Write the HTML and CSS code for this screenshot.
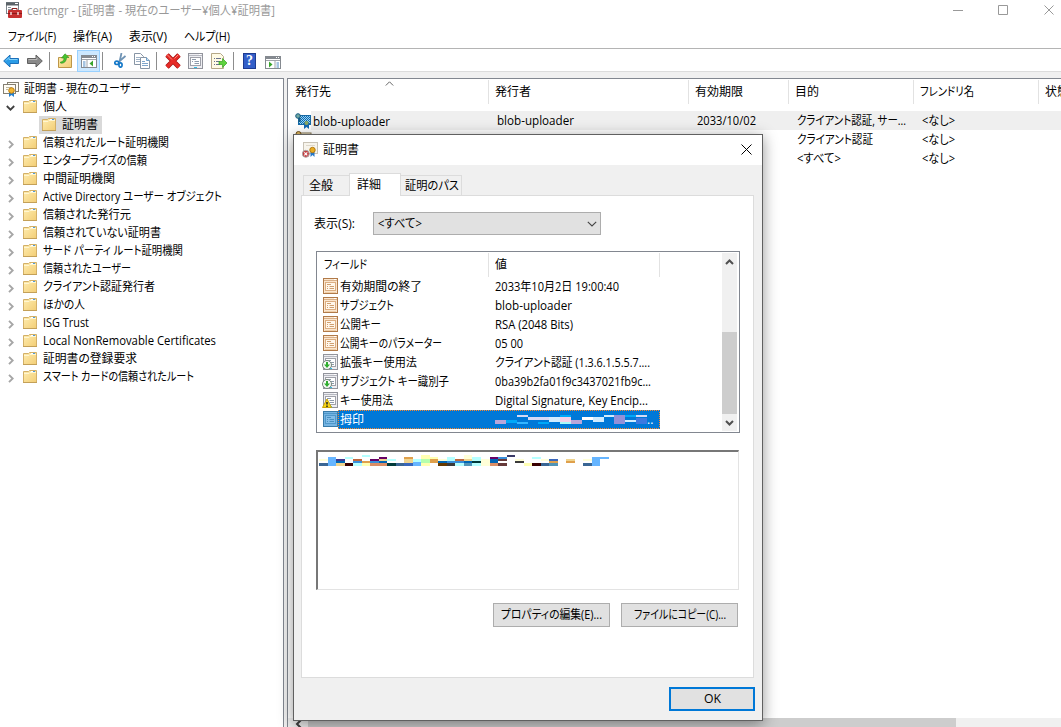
FILE: index.html
```html
<!DOCTYPE html>
<html lang="ja">
<head>
<meta charset="utf-8">
<title>certmgr</title>
<link rel="stylesheet" href="styles.css">
</head>
<body>
<svg class="defs" width="0" height="0" aria-hidden="true">
  <defs>
    <linearGradient id="fg" x1="0" y1="0" x2="1" y2="1"><stop offset="0" stop-color="#ffedb0"/><stop offset="1" stop-color="#f2cd75"/></linearGradient>
    <symbol id="folder" viewBox="0 0 14 13"><path d="M.5 1.500H5.500L6.500 .5H13.500V12.500H.5Z" fill="url(#fg)" stroke="#d3b068"/><path d="M1 3.500H6L7 2.500H13" fill="none" stroke="#fff6d2"/><path d="M0 12.500H14" stroke="#c3a058"/><path d="M8 1.500H10" stroke="#fff"/><path d="M10 1.500H12" stroke="#4c9be0"/></symbol>
    <symbol id="chev" viewBox="0 0 6 9"><path d="M1 .8L4.700 4.500 1 8.200" fill="none" stroke="#a6a6a6" stroke-width="1.900"/></symbol>
    <symbol id="down" viewBox="0 0 9 6"><path d="M.8 1L4.500 4.700 8.200 1" fill="none" stroke="#404040" stroke-width="1.800"/></symbol>
    <symbol id="prop" viewBox="0 0 15 16"><rect x=".5" y=".5" width="14" height="15" fill="#fbe6ce" stroke="#b17a49"/><path d="M1 2.500H14" stroke="#d9b08a"/><path d="M11 1.500H13" stroke="#fff"/><rect x="2.500" y="4.500" width="10" height="8" fill="#fff7ec" stroke="#dcae82"/><path d="M4 6.500H8M4 8.500H5M6.500 8.500H11M4 10.500H5M6.500 10.500H11" stroke="#cf9f70"/><path d="M2 14.500H13" stroke="#efcfa9"/></symbol>
    <symbol id="ext" viewBox="0 0 15 16"><rect x=".5" y=".5" width="14" height="15" fill="#eeeef2" stroke="#92949c"/><path d="M1 2.500H14" stroke="#b6b8c0"/><path d="M11 1.500H13" stroke="#fff"/><rect x="2.500" y="4.500" width="10" height="8" fill="#fff" stroke="#9fa1a9"/><path d="M4 6.500H8M4 8.500H5M6.500 8.500H11M6.500 10.500H11" stroke="#8e9bab"/><path d="M6 14.500H9" stroke="#29bde8"/></symbol>
    <symbol id="extdown" viewBox="0 0 16 16"><use href="#ext" x="1" width="15" height="16"/><circle cx="5" cy="11" r="4.500" fill="#f8f8f8" stroke="#76867a"/><path d="M4 8H6V10.500H8L5 14 2 10.500H4Z" fill="#2fae2e"/></symbol>
    <symbol id="extwarn" viewBox="0 0 16 16"><use href="#ext" x="1" width="15" height="16"/><path d="M5 7L9.500 15.500H.5Z" fill="#f7d716" stroke="#c9a40b"/><path d="M5 10V12.500M5 13.500V15" stroke="#222" stroke-width="1.500"/></symbol>
    <symbol id="cert" viewBox="0 0 16 16"><rect x="4.500" y="1.500" width="11" height="9" fill="#fffdf5" stroke="#847f72"/><rect x=".5" y="3.500" width="12" height="9" fill="#fffdf5" stroke="#847f72"/><path d="M3 6.500H9M3 8.500H5" stroke="#bdb7a3"/><path d="M6 11V16L8.500 14 11 16V11" fill="#237fcf"/><circle cx="8.500" cy="9.500" r="2.800" fill="#f4b631" stroke="#ba7d14"/></symbol>
    <symbol id="console" viewBox="0 0 16 14"><rect x=".5" y="1.500" width="15" height="12" fill="#fff" stroke="#858a90"/><path d="M1 3H15" stroke="#858a90" stroke-width="2"/><path d="M1 5.500H15M6 6V13" stroke="#a0a4aa"/><path d="M11 2.500H12M13 2.500H14" stroke="#fff"/></symbol>
  </defs>
</svg>

<div class="window">
  <header class="titlebar">
    <svg class="appicon" width="16" height="16" viewBox="0 0 16 16"><rect x=".5" y=".5" width="12" height="11" fill="#fff" stroke="#7d858c"/><path d="M0 2H13" stroke="#5b6268" stroke-width="3"/><path d="M9 1.500H12" stroke="#fff"/><path d="M2 5.500H5M2 7.500H7" stroke="#8b949c"/><path d="M6 8V6.500H11V8" fill="none" stroke="#8a2020"/><rect x="2" y="8" width="14" height="8" rx="1" fill="#c62f2f"/><path d="M2 11.500H16" stroke="#8b1a1a"/><path d="M5 10V13M12 10V13" stroke="#f6d5d5" stroke-width="1.500"/></svg>
    <span class="t" data-w="248">certmgr - [証明書 - 現在のユーザー¥個人¥証明書]</span>
    <svg class="winbtns" width="102" height="12" viewBox="0 0 102 12" fill="none" stroke="#999"><path d="M0 5.500H10"/><path d="M45.500 .5H54.500V9.500H45.500Z"/><path d="M91.500 .5L100.500 9.500M100.500 .5L91.500 9.500"/></svg>
  </header>
  <nav class="menu">
    <span class="t" data-w="48">ファイル(F)</span><span class="t" data-w="39">操作(A)</span><span class="t" data-w="38">表示(V)</span><span class="t" data-w="46">ヘルプ(H)</span>
  </nav>
  <div class="toolbar">
    <svg class="tb1" width="17" height="14" viewBox="0 0 17 14"><path d="M.7 7L7 1V4.500H15.500V9.500H7V13Z" fill="#2b9ce6" stroke="#1b6fba"/><path d="M3 6.500L6 3.500V5.500H14.500" fill="none" stroke="#83d1fa"/></svg>
    <svg class="tb2" width="17" height="14" viewBox="0 0 17 14"><path d="M16.300 7L10 1V4.500H1.500V9.500H10V13Z" fill="#898989" stroke="#606060"/><path d="M2.500 5.500H11V3.500" fill="none" stroke="#b9b9b9"/></svg>
    <i class="sep"></i>
    <svg class="tb3" width="14" height="15" viewBox="0 0 14 15"><path d="M.5 4.500H8L9 2.500H13.500V14.500H.5Z" fill="url(#fg)" stroke="#bd9648"/><path d="M2.500 9C5 9 6 7 6 5H3.500L7 .8 11 4.500H8.500C8.500 8 6 11 2.500 10Z" fill="#47c52e" stroke="#308c20" stroke-width=".6"/></svg>
    <span class="pressed"><svg width="16" height="14"><use href="#console"/><path d="M2 8H4.500M2 10H4.500M2 12H4.500" stroke="#4d89c2"/><path d="M12 6.500V12.500L8.500 9.500Z" fill="#38a52c"/></svg></span>
    <i class="sep"></i>
    <svg class="tb5" width="12" height="15" viewBox="0 0 12 15"><path d="M7.500 0L5.500 9M11.500 3L4 9.500" stroke="#6f93b4" stroke-width="1.800"/><ellipse cx="2.800" cy="9.800" rx="2" ry="1.700" fill="none" stroke="#1478c8" stroke-width="1.700"/><ellipse cx="6.500" cy="12" rx="1.600" ry="2.200" fill="none" stroke="#1478c8" stroke-width="1.700"/></svg>
    <svg class="tb6" width="16" height="16" viewBox="0 0 16 16"><path d="M.5 .5H6.500L9.500 3.500V11.500H.5Z" fill="#fff" stroke="#8795a5"/><path d="M2 4.500H6M2 6.500H6M2 8.500H6" stroke="#9fb2c6"/><path d="M6.500 4.500H12.500L15.500 7.500V15.500H6.500Z" fill="#fff" stroke="#8795a5"/><path d="M12.500 4.500V7.500H15.500" fill="#c7dff3" stroke="#6f9fc9"/><path d="M8 8.500H11M8 10.500H14M8 12.500H14" stroke="#7fa6cc"/></svg>
    <i class="sep"></i>
    <svg class="tb7" width="16" height="16" viewBox="0 0 16 16"><path d="M2 2L14 14M14 2L2 14" stroke="#a31414" stroke-width="4.800"/><path d="M2 2L14 14M14 2L2 14" stroke="#e72b27" stroke-width="3.400"/><path d="M2 1.500L7 6.500M13 2L9.500 5.500" stroke="#ff8b80"/></svg>
    <svg class="tb8" width="15" height="16"><use href="#ext"/></svg>
    <svg class="tb9" width="16" height="16" viewBox="0 0 16 16"><path d="M.5 .5H9.500L12.500 3.500V15.500H.5Z" fill="#fffbe5" stroke="#b5a887"/><path d="M3 5.500H4M5 5.500H10M3 8.500H4M5 8.500H9M3 11.500H4M5 11.500H9" stroke="#69718e"/><path d="M8 8.500H11.500V5.500L16 10 11.500 14.500V11.500H8Z" fill="#5fd33d" stroke="#37a222" stroke-width=".7"/></svg>
    <i class="sep"></i>
    <span class="help">?</span>
    <svg class="tb11" width="16" height="14" viewBox="0 0 16 14"><rect x=".5" y="1.500" width="15" height="12" fill="#fff" stroke="#858a90"/><path d="M1 3H15" stroke="#858a90" stroke-width="2"/><path d="M1 5.500H15M10 6V13" stroke="#a0a4aa"/><path d="M11 2.500H12M13 2.500H14" stroke="#fff"/><path d="M4 6.500V12.500L7.500 9.500Z" fill="#38a52c"/><path d="M11.500 8H14M11.500 10H14M11.500 12H14" stroke="#4d89c2"/></svg>
  </div>

  <main class="panes">
    <aside class="tree">
      <div class="node root"><svg width="16" height="16"><use href="#cert"/></svg><span class="t" data-w="117">証明書 - 現在のユーザー</span></div>
      <div class="node"><svg class="exp" width="9" height="6"><use href="#down"/></svg><svg class="fold" width="14" height="13"><use href="#folder"/></svg><span class="t" data-w="24">個人</span></div>
      <div class="node child"><div class="picked"><svg class="fold" width="14" height="13"><use href="#folder"/></svg><span class="t" data-w="36">証明書</span></div></div>
      <div class="node"><svg class="exp c" width="6" height="9"><use href="#chev"/></svg><svg class="fold" width="14" height="13"><use href="#folder"/></svg><span class="t" data-w="126">信頼されたルート証明機関</span></div>
      <div class="node"><svg class="exp c" width="6" height="9"><use href="#chev"/></svg><svg class="fold" width="14" height="13"><use href="#folder"/></svg><span class="t" data-w="104">エンタープライズの信頼</span></div>
      <div class="node"><svg class="exp c" width="6" height="9"><use href="#chev"/></svg><svg class="fold" width="14" height="13"><use href="#folder"/></svg><span class="t" data-w="72">中間証明機関</span></div>
      <div class="node"><svg class="exp c" width="6" height="9"><use href="#chev"/></svg><svg class="fold" width="14" height="13"><use href="#folder"/></svg><span class="t" data-w="179">Active Directory ユーザー オブジェクト</span></div>
      <div class="node"><svg class="exp c" width="6" height="9"><use href="#chev"/></svg><svg class="fold" width="14" height="13"><use href="#folder"/></svg><span class="t" data-w="88">信頼された発行元</span></div>
      <div class="node"><svg class="exp c" width="6" height="9"><use href="#chev"/></svg><svg class="fold" width="14" height="13"><use href="#folder"/></svg><span class="t" data-w="118">信頼されていない証明書</span></div>
      <div class="node"><svg class="exp c" width="6" height="9"><use href="#chev"/></svg><svg class="fold" width="14" height="13"><use href="#folder"/></svg><span class="t" data-w="140">サード パーティ ルート証明機関</span></div>
      <div class="node"><svg class="exp c" width="6" height="9"><use href="#chev"/></svg><svg class="fold" width="14" height="13"><use href="#folder"/></svg><span class="t" data-w="88">信頼されたユーザー</span></div>
      <div class="node"><svg class="exp c" width="6" height="9"><use href="#chev"/></svg><svg class="fold" width="14" height="13"><use href="#folder"/></svg><span class="t" data-w="112">クライアント認証発行者</span></div>
      <div class="node"><svg class="exp c" width="6" height="9"><use href="#chev"/></svg><svg class="fold" width="14" height="13"><use href="#folder"/></svg><span class="t" data-w="42">ほかの人</span></div>
      <div class="node"><svg class="exp c" width="6" height="9"><use href="#chev"/></svg><svg class="fold" width="14" height="13"><use href="#folder"/></svg><span class="t" data-w="46">ISG Trust</span></div>
      <div class="node"><svg class="exp c" width="6" height="9"><use href="#chev"/></svg><svg class="fold" width="14" height="13"><use href="#folder"/></svg><span class="t" data-w="173">Local NonRemovable Certificates</span></div>
      <div class="node"><svg class="exp c" width="6" height="9"><use href="#chev"/></svg><svg class="fold" width="14" height="13"><use href="#folder"/></svg><span class="t" data-w="94">証明書の登録要求</span></div>
      <div class="node"><svg class="exp c" width="6" height="9"><use href="#chev"/></svg><svg class="fold" width="14" height="13"><use href="#folder"/></svg><span class="t" data-w="151">スマート カードの信頼されたルート</span></div>
    </aside>

    <section class="list">
      <div class="cols head">
        <div><span class="t" data-w="36">発行先</span><svg class="sort" width="9" height="5" viewBox="0 0 9 5"><path d="M.8 4.500L4.500 .8 8.200 4.500" fill="none" stroke="#666"/></svg></div>
        <div><span class="t" data-w="36">発行者</span></div><div><span class="t" data-w="48">有効期限</span></div><div><span class="t" data-w="24">目的</span></div><div><span class="t" data-w="54">フレンドリ名</span></div><div><span class="t" data-w="24">状態</span></div>
      </div>
      <div class="cols row sel">
        <div class="first"><svg width="17" height="16" viewBox="0 0 17 16"><defs><pattern id="dots" width="2" height="2" patternUnits="userSpaceOnUse"><rect width="2" height="2" fill="#9cd2ee"/><path d="M0 0H1V1H0ZM1 1H2V2H1Z" fill="#0869b5"/></pattern></defs><rect x="3.500" y="2.500" width="12" height="9" fill="url(#dots)" stroke="#176aa5"/><circle cx="3" cy="3" r="2.300" fill="#72a7a0" stroke="#145b82"/><path d="M4.500 5V9" stroke="#145b82" stroke-width="2"/><path d="M9 10V16L11.500 14 14 16V10Z" fill="#1468b2"/><circle cx="11.500" cy="10" r="2" fill="#8fa85f"/></svg><span class="t" data-w="77">blob-uploader</span></div>
        <div><span class="t" data-w="77">blob-uploader</span></div><div><span class="t" data-w="59">2033/10/02</span></div><div><span class="t" data-w="109">クライアント認証, サー...</span></div><div><span class="t" data-w="33">&lt;なし&gt;</span></div><div></div>
      </div>
      <div class="cols row">
        <div class="first"><svg width="17" height="16" viewBox="0 0 17 16"><rect x="3" y="2" width="13" height="10" fill="#fff8e5" stroke="#857751"/><circle cx="3.500" cy="3" r="2.500" fill="#d8b15c" stroke="#70501d"/></svg></div>
        <div></div><div></div><div><span class="t" data-w="76">クライアント認証</span></div><div><span class="t" data-w="33">&lt;なし&gt;</span></div><div></div>
      </div>
      <div class="cols row">
        <div></div><div></div><div></div><div><span class="t" data-w="44">&lt;すべて&gt;</span></div><div><span class="t" data-w="33">&lt;なし&gt;</span></div><div></div>
      </div>
      <div class="hscroll"><svg width="20" height="9" viewBox="0 0 20 9"><path d="M13 2L9 6 13 10" fill="none" stroke="#404040" stroke-width="2"/></svg><i></i></div>
    </section>
  </main>
</div>

<section class="dialog">
  <header class="dtitle">
    <svg width="16" height="16" viewBox="0 0 16 16"><rect x="1.500" y=".5" width="14" height="11" fill="#f7f4ec" stroke="#c9c3b6"/><path d="M4 3.500H13" stroke="#ddd7ca"/><path d="M8.500 9V15L10.500 13 12.500 15V9Z" fill="#2677c8"/><circle cx="10.500" cy="8" r="2.700" fill="#e9ad22" stroke="#b57b12"/><circle cx="3.800" cy="11.800" r="3.500" fill="#c5393d" stroke="#aaa"/><path d="M2.300 10.300L5.300 13.300M5.300 10.300L2.300 13.300" stroke="#fff" stroke-width="1.200"/></svg>
    <span class="t" data-w="36">証明書</span>
    <svg class="close" width="11" height="11" viewBox="0 0 11 11"><path d="M.5 .5L10.500 10.500M10.500 .5L.5 10.500" stroke="#000"/></svg>
  </header>
  <div class="tabs"><div class="tab a"><span class="t" data-w="24">全般</span></div><div class="tab b"><span class="t" data-w="24">詳細</span></div><div class="tab d"><span class="t" data-w="54">証明のパス</span></div></div>
  <div class="page">
    <div class="show"><label><span class="t" data-w="41">表示(S):</span></label><div class="combo"><span class="t" data-w="44">&lt;すべて&gt;</span><svg width="10" height="6" viewBox="0 0 10 6"><path d="M.8 .8L5 5 9.200 .8" fill="none" stroke="#444" stroke-width="1.100"/></svg></div></div>
    <div class="fields">
      <div class="table">
        <div class="frow fhead"><div><span class="t" data-w="43">フィールド</span></div><div><span class="t" data-w="12">値</span></div></div>
        <div class="frow"><div><svg class="w15"><use href="#prop"/></svg><span class="t" data-w="82">有効期間の終了</span></div><div><span class="t" data-w="124">2033年10月2日 19:00:40</span></div></div>
        <div class="frow"><div><svg class="w15"><use href="#prop"/></svg><span class="t" data-w="54">サブジェクト</span></div><div><span class="t" data-w="77">blob-uploader</span></div></div>
        <div class="frow"><div><svg class="w15"><use href="#prop"/></svg><span class="t" data-w="41">公開キー</span></div><div><span class="t" data-w="78">RSA (2048 Bits)</span></div></div>
        <div class="frow"><div><svg class="w15"><use href="#prop"/></svg><span class="t" data-w="102">公開キーのパラメーター</span></div><div><span class="t" data-w="28">05 00</span></div></div>
        <div class="frow"><div><svg class="w16"><use href="#extdown"/></svg><span class="t" data-w="77">拡張キー使用法</span></div><div><span class="t" data-w="155">クライアント認証 (1.3.6.1.5.5.7....</span></div></div>
        <div class="frow"><div><svg class="w16"><use href="#extdown"/></svg><span class="t" data-w="109">サブジェクト キー識別子</span></div><div><span class="t" data-w="156">0ba39b2fa01f9c3437021fb9c...</span></div></div>
        <div class="frow"><div><svg class="w16"><use href="#extwarn"/></svg><span class="t" data-w="53">キー使用法</span></div><div><span class="t" data-w="153">Digital Signature, Key Encip...</span></div></div>
        <div class="frow fsel"><div><svg class="w15" viewBox="0 0 15 16"><rect x=".5" y=".5" width="14" height="15" fill="#75b4e2" stroke="#397ba9"/><path d="M1 2.500H14" stroke="#4f97c9"/><rect x="2.500" y="4.500" width="10" height="8" fill="#82bde8" stroke="#5098ca"/><path d="M4 6.500H8M4 8.500H5M6.500 8.500H11M4 10.500H5M6.500 10.500H11" stroke="#4a90c0"/></svg></div><div class="band"><span class="t" data-w="24">拇印</span>
          <svg class="redact" width="152" height="9" viewBox="495 415 152 9" shape-rendering="crispEdges"><path d="M495 420h11v4h-11zM571 420h11v4h-11z" fill="#b8a6da"/><path d="M506 420h11v3h-11zM538 422h11v2h-11zM560 415h11v2h-11zM625 415h11v2h-11z" fill="#00a8f8"/><path d="M517 415h11v2h-11zM528 417h21v3h-21zM636 415h11v2h-11z" fill="#d4daf6"/><path d="M517 422h11v2h-11z" fill="#35b5ff"/><path d="M549 417h11v5h-11zM593 417h11v5h-11zM604 415h10v2h-10zM625 420h11v2h-11z" fill="#d0ecff"/><path d="M560 417h11v5h-11z" fill="#f4d0e8"/><path d="M560 422h11v2h-11z" fill="#a8f8f8"/><path d="M582 417h11v3h-11z" fill="#fff"/><path d="M614 415h11v9h-11z" fill="#9490d8"/><path d="M636 418h11v6h-11z" fill="#3c78e0"/></svg><span class="dots">..</span></div></div>
      </div>
      <div class="vscroll"><svg width="9" height="6" viewBox="0 0 9 6"><path d="M1 5L4.500 1.500 8 5" fill="none" stroke="#505050" stroke-width="2"/></svg><i></i><svg width="9" height="6" viewBox="0 0 9 6"><path d="M1 1L4.500 4.500 8 1" fill="none" stroke="#505050" stroke-width="2"/></svg></div>
    </div>
    <div class="value">
      <svg width="300" height="15" viewBox="54 36 900 45" shape-rendering="crispEdges">
        <path d="M58 57h26v6h-26zM543 57h27v21h-27zM414 57h27v6h-27zM645 57h27v6h-27zM723 57h24v6h-24zM849 57h27v6h-27zM492 45h24v12h-24z" fill="#ffffd8"/>
        <path d="M84 51h24v27h-24zM339 66h24v12h-24zM876 51h24v27h-24zM900 51h27v6h-27z" fill="#66b5ff"/>
        <path d="M58 69h26v9h-26zM288 69h24v9h-24zM723 69h24v9h-24zM849 69h27v9h-27z" fill="#3a6694"/>
        <path d="M312 69h27v9h-27zM747 57h27v6h-27z" fill="#3966bb"/>
        <path d="M108 57h27v6h-27z" fill="#3d3990"/><path d="M210 57h27v6h-27zM237 51h24v6h-24zM570 51h24v6h-24z" fill="#660066"/>
        <path d="M108 63h27v6h-27zM237 63h24v6h-24zM414 63h27v6h-27zM492 63h24v6h-24zM570 57h24v12h-24z" fill="#0066b5"/>
        <path d="M108 69h27v9h-27zM237 57h24v6h-24zM312 57h27v12h-27zM492 57h24v6h-24zM798 57h27v6h-27z" fill="#f0d48e"/>
        <path d="M135 51h24v6h-24zM186 45h24v6h-24zM159 69h27v9h-27zM261 57h27v6h-27zM339 57h24v9h-24zM441 51h24v12h-24zM465 69h27v9h-27zM516 51h27v12h-27zM516 69h27v9h-27zM696 51h27v6h-27z" fill="#b5ffff"/>
        <path d="M135 69h24v9h-24zM696 69h27v9h-27z" fill="#3a0000"/>
        <path d="M159 57h27v6h-27zM465 57h27v6h-27z" fill="#bd693f"/>
        <path d="M159 63h27v6h-27zM210 63h27v6h-27zM441 63h24v6h-24zM465 63h27v6h-27zM594 51h27v6h-27z" fill="#398fdb"/>
        <path d="M186 63h24v6h-24zM312 51h27v6h-27zM390 57h24v12h-24zM747 63h27v6h-27zM798 63h27v6h-27z" fill="#dfa04c"/>
        <path d="M186 69h24v9h-24zM363 45h27v33h-27zM390 51h24v6h-24zM672 69h24v9h-24z" fill="#ffffb2"/>
        <path d="M363 57h27v12h-27z" fill="#b5ffad"/>
        <path d="M210 69h51v9h-51zM570 69h24v9h-24z" fill="#db8e66"/>
        <path d="M261 69h27v9h-27zM516 63h27v6h-27z" fill="#003a3a"/>
        <path d="M414 69h27v9h-27z" fill="#663a00"/><path d="M441 69h24v9h-24zM645 63h27v6h-27z" fill="#3a3a3a"/>
        <path d="M492 69h24v9h-24zM747 69h27v9h-27z" fill="#5094b8"/>
        <path d="M594 57h27v6h-27zM594 69h27v9h-27z" fill="#663a3a"/><path d="M621 45h24v6h-24z" fill="#3a3a66"/>
      </svg>
    </div>
    <div class="actions"><button><span class="t" data-w="101">プロパティの編集(E)...</span></button><button><span class="t" data-w="92">ファイルにコピー(C)...</span></button></div>
  </div>
  <footer><button class="ok"><span class="t" data-w="17">OK</span></button></footer>
</section>
<script src="script.js"></script>
</body>
</html>
```

FILE: styles.css
```css
* { box-sizing: border-box; }
body { margin: 0; width: 1061px; height: 727px; overflow: hidden; background: #fff; color: #000; font: 12px/18px "Open Sans", "Noto Sans CJK JP", sans-serif; font-feature-settings: "palt"; }
svg { display: block; flex: none; }
.defs { position: absolute; }
.t { display: inline-block; white-space: nowrap; transform-origin: 0 50%; flex: none; }
.window { width: 1061px; height: 727px; display: flex; flex-direction: column; }
.titlebar { height: 24px; display: flex; align-items: flex-start; padding: 2px 6px; color: #999; }
.titlebar .t { margin-left: 5px; }
.winbtns { margin: 3px 0 0 auto; }
.menu { height: 24px; display: flex; padding: 4px 8px; gap: 17px; }
.toolbar { height: 24px; border-top: 1px solid #b4b4b4; border-bottom: 1px solid #dcdcdc; display: flex; align-items: center; padding: 1px 0 0 3px; }
.sep { width: 1px; height: 18px; background: #8d8d8d; flex: none; }
.tb2 { margin: 0 6px; }
.tb3 { margin: 0 5px 0 8px; }
.pressed { width: 23px; height: 22px; border: 1px solid #99d1ff; background: #cce8ff; display: flex; align-items: center; justify-content: center; margin-right: 2px; padding-top: 1px; }
.tb5 { margin: 0 8px 0 11px; }
.tb6 { margin-right: 6px; }
.tb7 { margin: 0 7px 0 8px; }
.tb9 { margin: 0 6px 0 8px; }
.tb11 { margin-top: 2px; }
.help { width: 13px; height: 16px; margin: 0 9px; background: #335fc9; border: 1px solid #1d3b91; color: #fff; font: bold 14px/14px "Liberation Serif", serif; text-align: center; }
.panes { flex: 1; min-height: 0; display: flex; gap: 3px; background: #f0f0f0; padding-top: 6px; }
.tree { width: 284px; background: #fff; border-top: 1px solid #828790; border-right: 1px solid #828790; padding-top: 1px; }
.node { height: 18px; display: flex; align-items: center; padding-left: 6px; }
.root { padding-left: 3px; gap: 5px; }
.exp { margin: 2px 8px 0 0; }
.exp.c { margin: 2px 9px 0 2px; }
.fold { margin: -1px 6px 0 0; }
.child { padding-left: 39px; }
.picked { display: flex; align-items: center; height: 18px; width: 63px; background: #d9d9d9; padding-left: 3px; }
.list { flex: 1; min-width: 0; background: #fff; border-top: 1px solid #828790; border-left: 1px solid #828790; display: flex; flex-direction: column; overflow: hidden; }
.cols { display: grid; grid-template-columns: 201px 200px 100px 125px 125px 30px; width: 781px; flex: none; }
.head { height: 32px; padding-top: 1px; }
.head > div { height: 24px; border-right: 1px solid #e2e2e2; padding: 3px 0 0 6px; display: flex; }
.head > div:first-child { padding-left: 7px; }
.head .sort { margin: -2px 0 0 54px; }
.row { height: 19px; }
.row > div { padding: 1px 0 0 8px; }
.row > .first { display: flex; gap: 1px; align-items: center; padding: 0 0 0 7px; }
.first .t { margin-top: 2px; }
.first svg { margin-top: -1px; }
.sel { background: linear-gradient(90deg, #fff 23px, #efefef 23px); }
.hscroll { margin-top: auto; height: 9px; background: #f0f0f0; display: flex; }
.hscroll i { width: 648px; background: #cdcdcd; }
.dialog { position: absolute; left: 293px; top: 134px; width: 470px; height: 587px; background: #f0f0f0; border: 1px solid #606060; box-shadow: 0 3px 14px rgba(0,0,0,.42); display: flex; flex-direction: column; }
.dtitle { height: 30px; background: #fff; display: flex; align-items: center; padding: 0 10px 0 8px; gap: 5px; flex: none; }
.close { margin: -2px 0 0 auto; }
.tabs { height: 31px; flex: none; display: flex; align-items: flex-end; padding-left: 9px; z-index: 1; }
.tab { height: 21px; border: 1px solid #dcdcdc; border-bottom: 0; padding: 1px 0 0 5px; background: #f0f0f0; }
.tab.a { width: 46px; border-right: 0; height: 20px; margin-bottom: 1px; }
.tab.b { width: 52px; height: 23px; padding: 2px 0 0 7px; background: #fff; }
.tab.d { width: 61px; padding-left: 4px; border-left: 0; height: 20px; margin-bottom: 1px; }
.page { margin: -1px 8px 0 7px; height: 483px; background: #fff; border: 1px solid #dcdcdc; padding: 16px 12px 0 14px; flex: none; display: flex; flex-direction: column; }
.show { display: flex; align-items: center; height: 23px; margin-left: -2px; }
.show label { width: 59px; }
.combo { width: 228px; height: 23px; background: #e1e1e1; border: 1px solid #adadad; display: flex; align-items: center; justify-content: space-between; padding: 0 3px 0 4px; }
.fields { margin-top: 16px; width: 424px; height: 182px; border: 1px solid #828790; display: flex; padding: 1px 2px 1px 1px; flex: none; }
.table { flex: 1; min-width: 0; }
.frow { height: 19px; display: grid; grid-template-columns: 171px 171px; width: 342px; }
.frow > div { display: flex; align-items: center; padding-left: 6px; }
.frow > div:first-child { padding-left: 4px; }
.fhead { height: 24px; }
.frow.fhead > div { border-right: 1px solid #e2e2e2; }
.frow.fhead > div:first-child { padding-left: 6px; }
.w15 { width: 15px; height: 16px; margin: -1px 2px 0 1px; }
.w16 { width: 16px; height: 16px; margin: -1px 2px 0 0; }
.frow.fsel { grid-template-columns: 20px 322px; }
.frow > .band {
  color: #fff;
  padding-left: 2px;
  background:
    repeating-linear-gradient(90deg, #ff8728 0 1px, #0078d7 1px 2px) 0 0 / 100% 1px no-repeat,
    repeating-linear-gradient(90deg, #ff8728 0 1px, #0078d7 1px 2px) 0 100% / 100% 1px no-repeat,
    repeating-linear-gradient(180deg, #ff8728 0 1px, #0078d7 1px 2px) 0 0 / 1px 100% no-repeat,
    repeating-linear-gradient(180deg, #ff8728 0 1px, #0078d7 1px 2px) 100% 0 / 1px 100% no-repeat,
    #0078d7;
}
.frow.fsel > div:first-child { padding-left: 4px; }
.fsel .w15 { margin-right: 0; }
.redact { margin-left: 131px; }
.dots { line-height: 10px; }
.vscroll { width: 15px; background: #f0f0f0; display: flex; flex-direction: column; align-items: center; padding: 6px 0 5px; }
.vscroll i { width: 15px; height: 82px; background: #cdcdcd; margin: auto 0 6px; }
.value { width: 423px; height: 140px; margin-top: 17px; border-style: solid; border-width: 2px 1px 1px 2px; border-color: #777 #e3e3e3 #e3e3e3 #777; flex: none; }
.actions { display: flex; gap: 11px; margin: 13px 0 0 177px; }
button { width: 117px; height: 24px; padding: 0; background: #e1e1e1; border: 1px solid #adadad; color: #000; font: inherit; font-feature-settings: inherit; display: flex; align-items: center; justify-content: center; flex: none; }
footer { display: flex; justify-content: flex-end; padding: 9px 7px 0 0; }
.ok { width: 86px; height: 24px; border: 2px solid #0078d7; }
```

FILE: script.js
```js
document.querySelectorAll('.t').forEach(function (el) {
  var want = Number(el.dataset.w);
  var have = el.getBoundingClientRect().width;
  el.style.transform = 'scaleX(' + want / have + ')';
  el.style.marginRight = (want - have) + 'px';
});
```
